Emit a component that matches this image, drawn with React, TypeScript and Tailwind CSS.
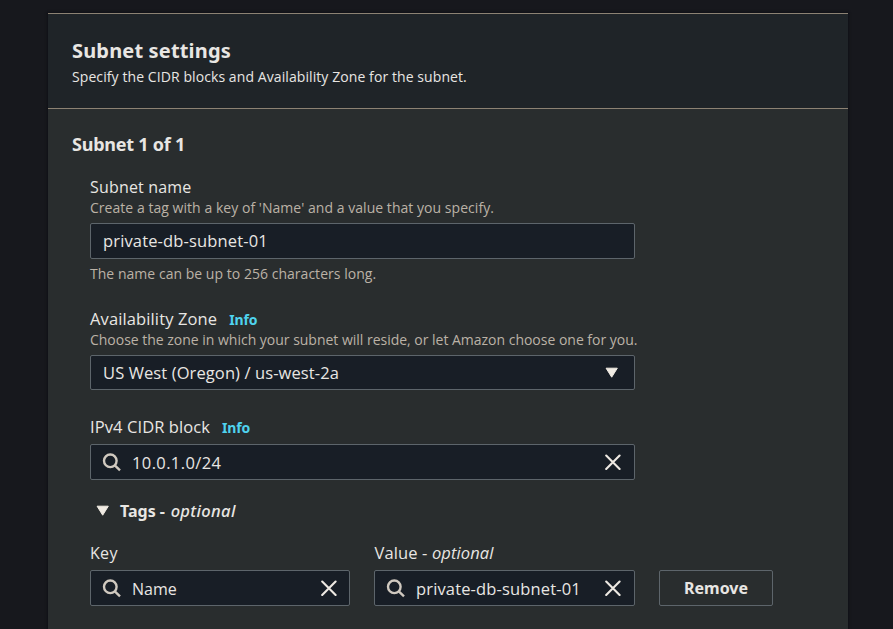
import React from "react";

function SearchIcon() {
  return (
    <svg width="20" height="20" viewBox="0 0 20 20" fill="none" stroke="#d0c9bf" strokeWidth="2.4" className="-ml-px shrink-0">
      <circle cx="8.3" cy="8.8" r="6.3" />
      <path d="M12.8 13.3l5.2 5" />
    </svg>
  );
}

function CloseIcon() {
  return (
    <svg width="16" height="16" viewBox="0 0 16 16" fill="none" stroke="#eee9e2" strokeWidth="2.1" strokeLinecap="round" className="shrink-0">
      <path d="M1.2 1.6l13.4 13.4M14.6 1.6L1.2 15" />
    </svg>
  );
}

function Caret() {
  return (
    <svg width="14" height="12" viewBox="0 0 14 12" className="shrink-0">
      <path d="M1.1 1.2h11.2L6.7 10.2z" fill="#f0ebe3" stroke="#f0ebe3" strokeWidth="1" strokeLinejoin="round" />
    </svg>
  );
}

function Box({ children, className = "" }: { children: React.ReactNode; className?: string }) {
  return (
    <div className={`flex items-center rounded-[2px] border border-[#5d656b] bg-[#181e26] pl-3 text-[16.5px] ${className}`}>
      {children}
    </div>
  );
}

function Info() {
  return <span className="ml-3 font-['Noto_Sans',sans-serif] text-[14px] font-bold tracking-[-0.15px] text-[#4fd3ee]">Info</span>;
}

export default function App() {
  return (
    <div className="h-[629px] overflow-hidden bg-[#17181d] px-12 pt-[13px] font-['Open_Sans','Noto_Sans',sans-serif] text-[#e8e6e3]">
      <div className="h-[616px] w-[800px] border-t border-[#8c8273] bg-[#292d2e] shadow-[0_0_2px_1px_#101116]">
        <header className="h-[95px] border-b border-[#8c8273] bg-[#1f2428] px-6 pt-[23px]">
          <h1 className="font-['Noto_Sans',sans-serif] text-[20px] leading-7 font-bold tracking-[0.16px]">Subnet settings</h1>
          <p className="text-[14px] leading-6 tracking-[0.085px]">Specify the CIDR blocks and Availability Zone for the subnet.</p>
        </header>
        <h2 className="px-6 pt-[23px] font-['Noto_Sans',sans-serif] text-[18px] leading-6 font-bold tracking-[-0.23px]">Subnet 1 of 1</h2>
        <div className="ml-[42px] w-[683px] pt-[19px]">
          <div className="h-6 text-[16px] leading-6 tracking-[0.18px]">Subnet name</div>
          <div className="h-6 text-[14px] leading-[18px] tracking-[0.04px] whitespace-nowrap text-[#bbb2a6]">Create a tag with a key of 'Name' and a value that you specify.</div>
          <Box className="h-9 w-[545px] tracking-[0.15px]">private-db-subnet-01</Box>
          <div className="mt-[5px] h-5 text-[14px] leading-5 tracking-[0.03px] text-[#bbb2a6]">The name can be up to 256 characters long.</div>

          <div className="mt-[23px] h-6 text-[16.5px] leading-6 tracking-[0.12px]">Availability Zone<Info /></div>
          <div className="h-6 text-[14px] leading-[18px] tracking-[-0.015px] whitespace-nowrap text-[#bbb2a6]">Choose the zone in which your subnet will reside, or let Amazon choose one for you.</div>
          <Box className="h-[35px] w-[545px] justify-between pt-px pr-[15px] tracking-[0.1px]">US West (Oregon) / us-west-2a<Caret /></Box>

          <div className="mt-[25px] h-[29px] text-[16.5px] leading-6 tracking-[0.09px]">IPv4 CIDR block<Info /></div>
          <Box className="h-9 w-[545px] pr-[13px]"><SearchIcon /><span className="ml-[10px] flex-1 pt-0.5 tracking-[0.38px]">10.0.1.0/24</span><CloseIcon /></Box>

          <div className="mt-[19px] flex h-6 items-center pl-[6px] font-['Noto_Sans',sans-serif] text-[16px] leading-6 font-bold">
            <Caret />
            <span className="ml-[10px]">Tags - <i className="ml-[1.5px] text-[16.5px] font-medium tracking-[0.35px]">optional</i></span>
          </div>
          <div className="mt-[18px] flex">
            <div className="w-[260px]">
              <div className="h-[29px] text-[16px] leading-6 tracking-[0.3px]">Key</div>
              <Box className="h-9 pr-3"><SearchIcon /><span className="ml-[10px] flex-1 pt-0.5 text-[16px]">Name</span><CloseIcon /></Box>
            </div>
            <div className="ml-6 w-[261px]">
              <div className="h-[29px] pl-[0.5px] text-[16.5px] leading-6 tracking-[0.12px]">Value - <i>optional</i></div>
              <Box className="h-9 pr-[13px]"><SearchIcon /><span className="ml-[10px] flex-1 pt-0.5 tracking-[0.15px]">private-db-subnet-01</span><CloseIcon /></Box>
            </div>
            <button className="mt-[29px] ml-6 h-9 w-[114px] rounded-[2px] border border-[#5d656b] font-['Noto_Sans',sans-serif] text-[16px] font-bold">Remove</button>
          </div>
        </div>
      </div>
    </div>
  );
}
